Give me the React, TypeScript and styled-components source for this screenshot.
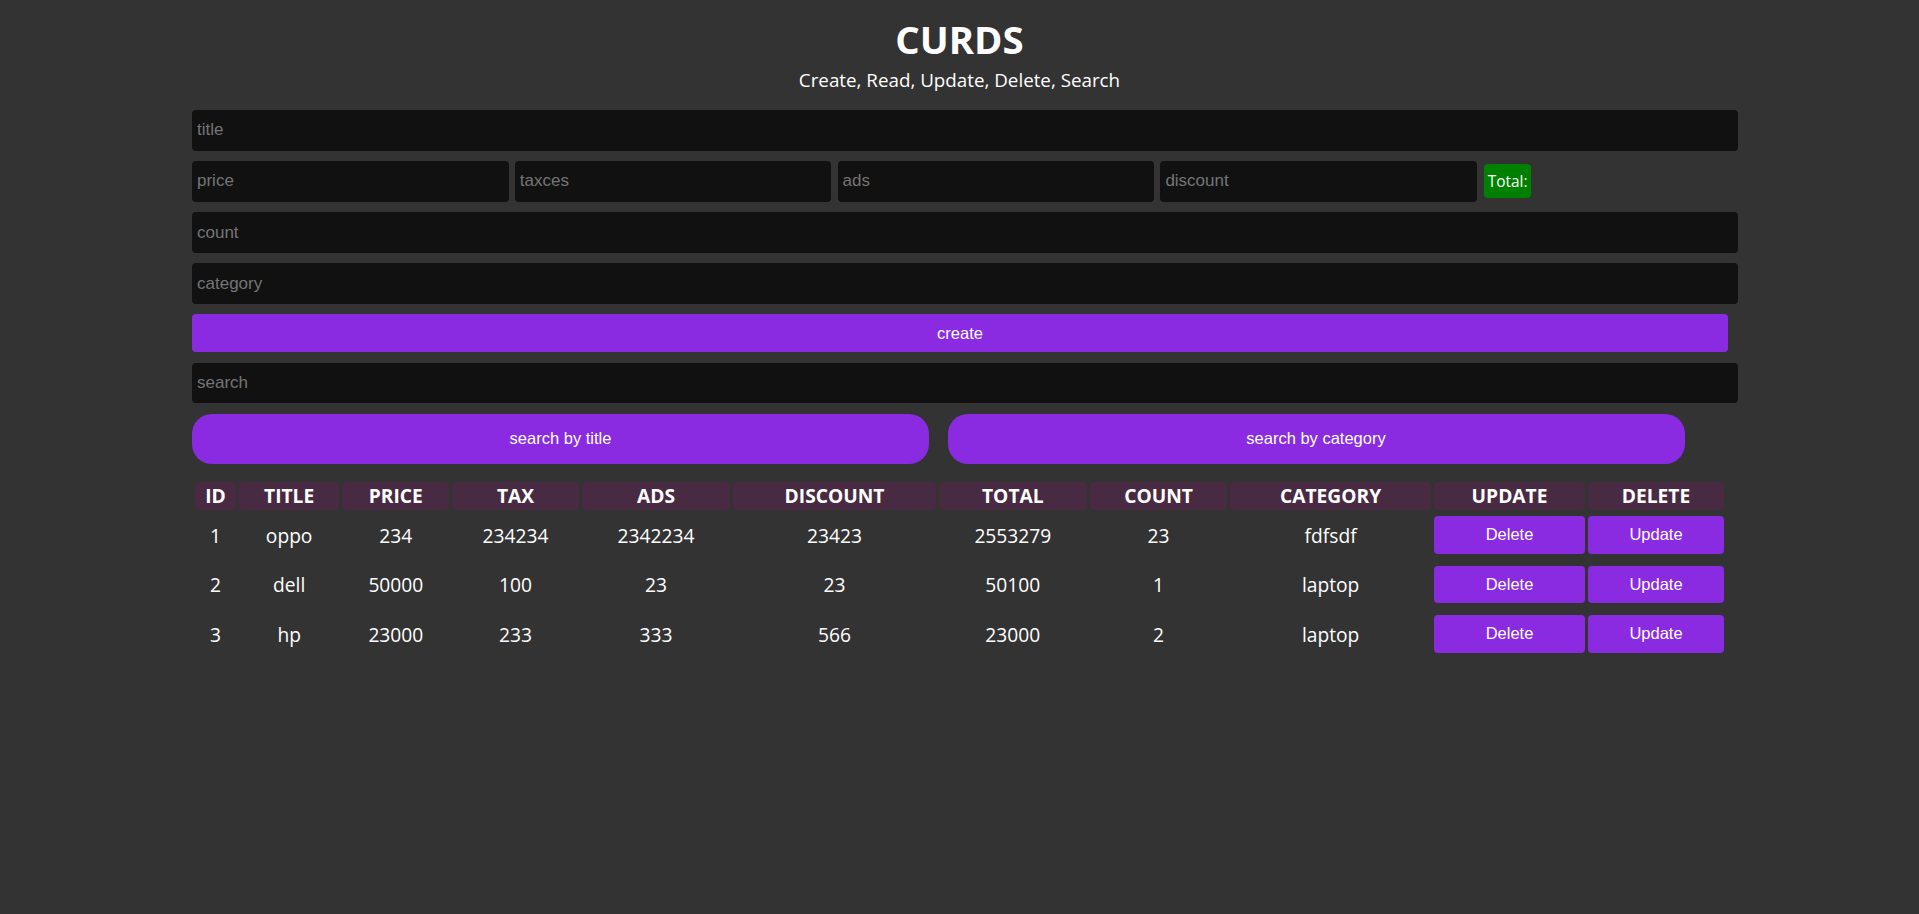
import React from "react";
import styled, { createGlobalStyle } from "styled-components";

const GlobalStyle = createGlobalStyle`
  html, body {
    margin: 0;
    padding: 0;
    background: #333333;
  }
  body {
    min-height: 914px;
    font-family: "Open Sans", "Noto Sans", sans-serif;
    font-size: 19.2px;
    color: #ffffff;
  }
  * { box-sizing: border-box; }
`;

const Page = styled.div`
  width: 100%;
  padding-top: 16px;
`;

const Header = styled.header`
  text-align: center;
`;

const Title = styled.h1`
  margin: 0;
  font-size: 38.4px;
  line-height: 46px;
  font-weight: 700;
`;

const Subtitle = styled.p`
  margin: 6px 0 0;
  font-size: 18.8px;
  line-height: 24px;
`;

const Main = styled.main`
  width: 1535px;
  margin: 18px auto 0;
  display: flex;
  flex-direction: column;
  align-items: flex-start;
  gap: 10.4px;
`;

const Field = styled.input<{ $w?: string }>`
  flex-shrink: 0;
  width: ${(p) => p.$w ?? "1545.5px"};
  height: 40.7px;
  padding: 0 5px;
  border: none;
  outline: none;
  border-radius: 4px;
  background: #111111;
  color: #ffffff;
  font-family: "Liberation Sans", Arial, sans-serif;
  font-size: 17px;
  &::placeholder {
    color: #757575;
  }
`;

const PriceRow = styled.div`
  display: flex;
  align-items: center;
  gap: 6.3px;
`;

const TotalBadge = styled.span`
  margin-left: 0.6px;
  height: 34px;
  padding: 0 4px;
  display: inline-flex;
  align-items: center;
  border-radius: 4px;
  background: #008000;
  color: #ffffff;
  font-size: 15.4px;
`;

const CreateButton = styled.button`
  width: 1536px;
  height: 38px;
  border: none;
  border-radius: 4px;
  background: #8a2be2;
  color: #ffffff;
  font-family: "Liberation Sans", Arial, sans-serif;
  font-size: 16.5px;
  cursor: pointer;
`;

const SearchRow = styled.div`
  display: flex;
  gap: 18.5px;
`;

const SearchButton = styled.button`
  width: 737px;
  height: 50px;
  border: none;
  border-radius: 20px;
  background: #8a2be2;
  color: #ffffff;
  font-family: "Liberation Sans", Arial, sans-serif;
  font-size: 16.5px;
  cursor: pointer;
`;

const Table = styled.table`
  width: 100%;
  margin-top: 5.5px;
  table-layout: fixed;
  border-spacing: 3px 2.5px;
  font-size: 19.2px;
`;

const Col = styled.col<{ $w: number }>`
  width: ${(p) => p.$w}px;
`;

const HeadCell = styled.th`
  height: 28.5px;
  padding: 1px 0;
  line-height: 26px;
  background: #482a42;
  border-radius: 4px;
  font-weight: 700;
  text-align: center;
  white-space: nowrap;
`;

const Cell = styled.td`
  height: 47px;
  padding: 1px 0;
  text-align: center;
  vertical-align: middle;
  line-height: 26px;
`;

const ActionCell = styled.td`
  padding: 1px 0;
  vertical-align: top;
`;

const ActionButton = styled.button`
  display: block;
  width: 100%;
  height: 37.5px;
  margin: 3px 0 5px;
  border: none;
  border-radius: 4px;
  background: #8a2be2;
  color: #ffffff;
  font-family: "Liberation Sans", Arial, sans-serif;
  font-size: 16.5px;
  cursor: pointer;
`;

const columns = [
  { label: "ID", w: 41 },
  { label: "TITLE", w: 100 },
  { label: "PRICE", w: 107 },
  { label: "TAX", w: 126 },
  { label: "ADS", w: 148.5 },
  { label: "DISCOUNT", w: 202 },
  { label: "TOTAL", w: 148 },
  { label: "COUNT", w: 137 },
  { label: "CATEGORY", w: 200.6 },
  { label: "UPDATE", w: 150.7 },
  { label: "DELETE", w: 135.7 },
];

const rows = [
  ["1", "oppo", "234", "234234", "2342234", "23423", "2553279", "23", "fdfsdf"],
  ["2", "dell", "50000", "100", "23", "23", "50100", "1", "laptop"],
  ["3", "hp", "23000", "233", "333", "566", "23000", "2", "laptop"],
];

export default function App() {
  return (
    <>
      <GlobalStyle />
      <Page>
        <Header>
          <Title>CURDS</Title>
          <Subtitle>Create, Read, Update, Delete, Search</Subtitle>
        </Header>
        <Main>
          <Field placeholder="title" />
          <PriceRow>
            <Field $w="316.5px" placeholder="price" />
            <Field $w="316.5px" placeholder="taxces" />
            <Field $w="316.5px" placeholder="ads" />
            <Field $w="316.5px" placeholder="discount" />
            <TotalBadge>Total:</TotalBadge>
          </PriceRow>
          <Field placeholder="count" />
          <Field placeholder="category" />
          <CreateButton>create</CreateButton>
          <Field placeholder="search" />
          <SearchRow>
            <SearchButton>search by title</SearchButton>
            <SearchButton>search by category</SearchButton>
          </SearchRow>
          <Table>
            <colgroup>
              {columns.map((c) => (
                <Col key={c.label} $w={c.w} />
              ))}
            </colgroup>
            <thead>
              <tr>
                {columns.map((c) => (
                  <HeadCell key={c.label}>{c.label}</HeadCell>
                ))}
              </tr>
            </thead>
            <tbody>
              {rows.map((r) => (
                <tr key={r[0]}>
                  {r.map((v, i) => (
                    <Cell key={i}>{v}</Cell>
                  ))}
                  <ActionCell>
                    <ActionButton>Delete</ActionButton>
                  </ActionCell>
                  <ActionCell>
                    <ActionButton>Update</ActionButton>
                  </ActionCell>
                </tr>
              ))}
            </tbody>
          </Table>
        </Main>
      </Page>
    </>
  );
}
